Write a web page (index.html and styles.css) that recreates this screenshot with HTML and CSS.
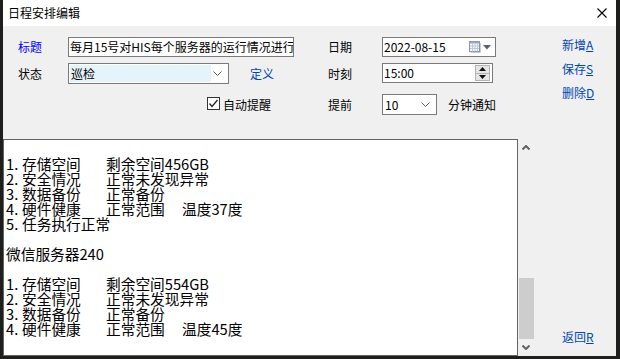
FILE: index.html
```html
<!DOCTYPE html>
<html lang="zh-CN">
<head>
    <title>日程安排编辑</title>
    <meta charset="UTF-8" />
    <link rel="stylesheet" href="styles.css">
</head>
<body>
    <div class="window">
        <div class="titlebar">
            <span class="title">日程安排编辑</span>
            <svg class="close" width="10" height="10" viewBox="0 0 10 10">
                <path d="M0.5 0.5 L9.5 9.5 M9.5 0.5 L0.5 9.5" stroke="#000" stroke-width="1.1" fill="none"/>
            </svg>
        </div>

        <div class="client">
            <div class="main">
                <div class="form">
                    <!-- row 1 -->
                    <span class="label link-blue">标题</span>
                    <div class="edit title-edit">每月15号对HIS每个服务器的运行情况进行巡检</div>
                    <span></span>
                    <span class="label">日期</span>
                    <div class="edit date-edit">
                        <span>2022-08-15</span>
                        <span class="date-btn">
                            <svg width="12" height="12" viewBox="0 0 12 12">
                                <rect x="0.5" y="0.5" width="10" height="10" fill="#f4f6fa" stroke="#8a94a6"/>
                                <rect x="0.5" y="0.5" width="10" height="2" fill="#9aa6bb"/>
                                <path d="M3.5 3 V10.5 M6 3 V10.5 M8.5 3 V10.5 M1 5 H10 M1 7.5 H10" stroke="#c2c8d4" stroke-width="1"/>
                                <path d="M11.5 2 V11.5 H2" stroke="#c9ccd2" fill="none"/>
                            </svg>
                            <svg width="8" height="5" viewBox="0 0 8 5">
                                <path d="M0 0 H8 L4 4.5 Z" fill="#4d6185"/>
                            </svg>
                        </span>
                    </div>

                    <!-- row 2 -->
                    <span class="label row2">状态</span>
                    <div class="cell">
                        <div class="combo state-combo">
                            <span class="combo-text">巡检</span>
                            <svg class="chev" width="9" height="5" viewBox="0 0 9 5">
                                <polyline points="0.5,0.5 4.5,4.5 8.5,0.5" stroke="#606060" fill="none"/>
                            </svg>
                        </div>
                        <span class="link define">定义</span>
                    </div>
                    <span></span>
                    <span class="label row2">时刻</span>
                    <div class="edit time-edit">
                        <span>15:00</span>
                        <span class="spin">
                            <span class="spin-btn">
                                <svg width="7" height="4" viewBox="0 0 7 4"><path d="M0 4 L3.5 0 L7 4 Z" fill="#111"/></svg>
                            </span>
                            <span class="spin-btn">
                                <svg width="7" height="4" viewBox="0 0 7 4"><path d="M0 0 L3.5 4 L7 0 Z" fill="#111"/></svg>
                            </span>
                        </span>
                    </div>

                    <!-- row 3 -->
                    <span></span>
                    <div class="cell check-cell">
                        <span class="checkbox">
                            <svg width="11" height="11" viewBox="0 0 11 11">
                                <polyline points="1.5,5.5 4,8.5 9.5,2" stroke="#222" stroke-width="1.3" fill="none"/>
                            </svg>
                        </span>
                        <span class="check-label">自动提醒</span>
                    </div>
                    <span></span>
                    <span class="label row3">提前</span>
                    <div class="cell">
                        <div class="combo ahead-combo">
                            <span class="combo-text">10</span>
                            <svg class="chev" width="9" height="5" viewBox="0 0 9 5">
                                <polyline points="0.5,0.5 4.5,4.5 8.5,0.5" stroke="#606060" fill="none"/>
                            </svg>
                        </div>
                        <span class="unit">分钟通知</span>
                    </div>
                </div>

                <div class="memo-wrap">
                    <div class="memo">
                        <div class="line"></div>
                        <div class="line"><span class="c1"><span class="n">1.</span>存储空间</span><span class="c2">剩余空间456GB</span></div>
                        <div class="line"><span class="c1"><span class="n">2.</span>安全情况</span><span class="c2">正常未发现异常</span></div>
                        <div class="line"><span class="c1"><span class="n">3.</span>数据备份</span><span class="c2">正常备份</span></div>
                        <div class="line"><span class="c1"><span class="n">4.</span>硬件健康</span><span class="c2">正常范围</span><span>温度37度</span></div>
                        <div class="line"><span class="n">5.</span>任务执行正常</div>
                        <div class="line"></div>
                        <div class="line">微信服务器240</div>
                        <div class="line"></div>
                        <div class="line"><span class="c1"><span class="n">1.</span>存储空间</span><span class="c2">剩余空间554GB</span></div>
                        <div class="line"><span class="c1"><span class="n">2.</span>安全情况</span><span class="c2">正常未发现异常</span></div>
                        <div class="line"><span class="c1"><span class="n">3.</span>数据备份</span><span class="c2">正常备份</span></div>
                        <div class="line"><span class="c1"><span class="n">4.</span>硬件健康</span><span class="c2">正常范围</span><span>温度45度</span></div>
                    </div>
                    <div class="vscroll">
                        <div class="arrow">
                            <svg width="8" height="5" viewBox="0 0 8 5"><polyline points="0.5,4.5 4,1 7.5,4.5" stroke="#606060" stroke-width="2" fill="none"/></svg>
                        </div>
                        <div class="track"><div class="thumb"></div></div>
                        <div class="arrow">
                            <svg width="8" height="5" viewBox="0 0 8 5"><polyline points="0.5,0.5 4,4 7.5,0.5" stroke="#606060" stroke-width="2" fill="none"/></svg>
                        </div>
                    </div>
                </div>
            </div>

            <div class="links">
                <span class="link">新增<u>A</u></span>
                <span class="link">保存<u>S</u></span>
                <span class="link">删除<u>D</u></span>
                <span class="link back">返回<u>R</u></span>
            </div>
        </div>
    </div>
</body>
</html>
```

FILE: styles.css
```css
body {
    margin: 0;
    background-color: #1e1e1c;
    font-family: "Noto Sans CJK SC", "Noto Sans", sans-serif;
    font-size: 12px;
    color: #000;
}
.window {
    margin-left: 3px;
    width: 613px;
    height: 356px;
    background-color: #f0f0f0;
    display: flex;
    flex-direction: column;
}
.titlebar {
    height: 26px;
    background-color: #fff;
    display: flex;
    align-items: center;
    justify-content: space-between;
    padding: 0 9px 0 5px;
}
.title {
    font-size: 12px;
    line-height: 26px;
}
.client {
    flex: 1;
    display: flex;
}
.main {
    width: 531px;
    display: flex;
    flex-direction: column;
}

/* form */
.form {
    height: 113px;
    box-sizing: border-box;
    padding: 11px 0 0 15px;
    display: grid;
    grid-template-columns: 50px 226px 34px 54px auto;
    grid-template-rows: 26px 31px 21px;
    align-items: start;
}
.label {
    line-height: 20px;
}
.label.row2, .label.row3 {
    line-height: 21px;
}
.link-blue {
    color: #0000ff;
}
.cell {
    display: flex;
    align-items: center;
    height: 21px;
}
.edit {
    box-sizing: border-box;
    height: 20px;
    border: 1px solid #7a7a7a;
    background-color: #fff;
    line-height: 18px;
    padding-left: 1px;
    white-space: nowrap;
    overflow: hidden;
}
.title-edit {
    width: 226px;
}
.date-edit {
    width: 114px;
    display: flex;
    align-items: center;
    justify-content: space-between;
}
.date-btn {
    display: flex;
    align-items: center;
    gap: 2px;
    padding-right: 4px;
}
.time-edit {
    width: 111px;
    display: flex;
    align-items: center;
    justify-content: space-between;
}
.spin {
    display: flex;
    flex-direction: column;
    width: 15px;
    height: 16px;
    margin-right: 2px;
    border: 1px solid #b4b4b4;
    box-sizing: border-box;
    background-color: #e6e6e6;
}
.spin-btn {
    flex: 1;
    display: flex;
    align-items: center;
    justify-content: center;
}
.spin-btn + .spin-btn {
    border-top: 1px solid #b4b4b4;
}
.combo {
    box-sizing: border-box;
    height: 21px;
    border: 1px solid #7a7a7a;
    background-color: #fff;
    display: flex;
    align-items: center;
    justify-content: space-between;
}
.state-combo {
    width: 161px;
}
.state-combo .combo-text {
    background-color: #e5f3fb;
    width: 140px;
    height: 17px;
    line-height: 17px;
    margin-left: 1px;
    padding-left: 1px;
}
.ahead-combo {
    width: 55px;
}
.ahead-combo .combo-text {
    padding-left: 2px;
}
.chev {
    margin-right: 6px;
}
.define {
    margin-left: 21px;
}
.check-cell {
    padding-left: 139px;
}
.checkbox {
    box-sizing: border-box;
    width: 13px;
    height: 13px;
    border: 1px solid #333;
    background-color: #fff;
    display: flex;
    align-items: center;
    justify-content: center;
    margin-top: -2px;
}
.check-label {
    margin-left: 3px;
}
.unit {
    margin-left: 11px;
}

/* memo */
.memo-wrap {
    flex: 1;
    display: flex;
}
.memo {
    width: 515px;
    box-sizing: border-box;
    border: 1px solid #646464;
    background-color: #fff;
    padding: 1px 0 0 2px;
    overflow: hidden;
    font-size: 14.7px;
    line-height: 15px;
    white-space: nowrap;
}
.line {
    height: 15px;
}
.n {
    display: inline-block;
    width: 16px;
}
.c1 {
    display: inline-block;
    width: 100px;
}
.c2 {
    display: inline-block;
    width: 76px;
}
.vscroll {
    width: 16px;
    display: flex;
    flex-direction: column;
}
.arrow {
    height: 17px;
    display: flex;
    align-items: center;
    justify-content: center;
}
.track {
    flex: 1;
    display: flex;
    flex-direction: column;
    justify-content: flex-end;
}
.thumb {
    height: 61px;
    margin-left: 1px;
    background-color: #cdcdcd;
}

/* right links */
.links {
    flex: 1;
    display: flex;
    flex-direction: column;
    padding: 7px 0 11px 28px;
}
.link {
    color: #0046b4;
    line-height: 24px;
}
.link u {
    text-underline-offset: 1px;
}
.links .back {
    margin-top: auto;
    line-height: 16px;
}
```
